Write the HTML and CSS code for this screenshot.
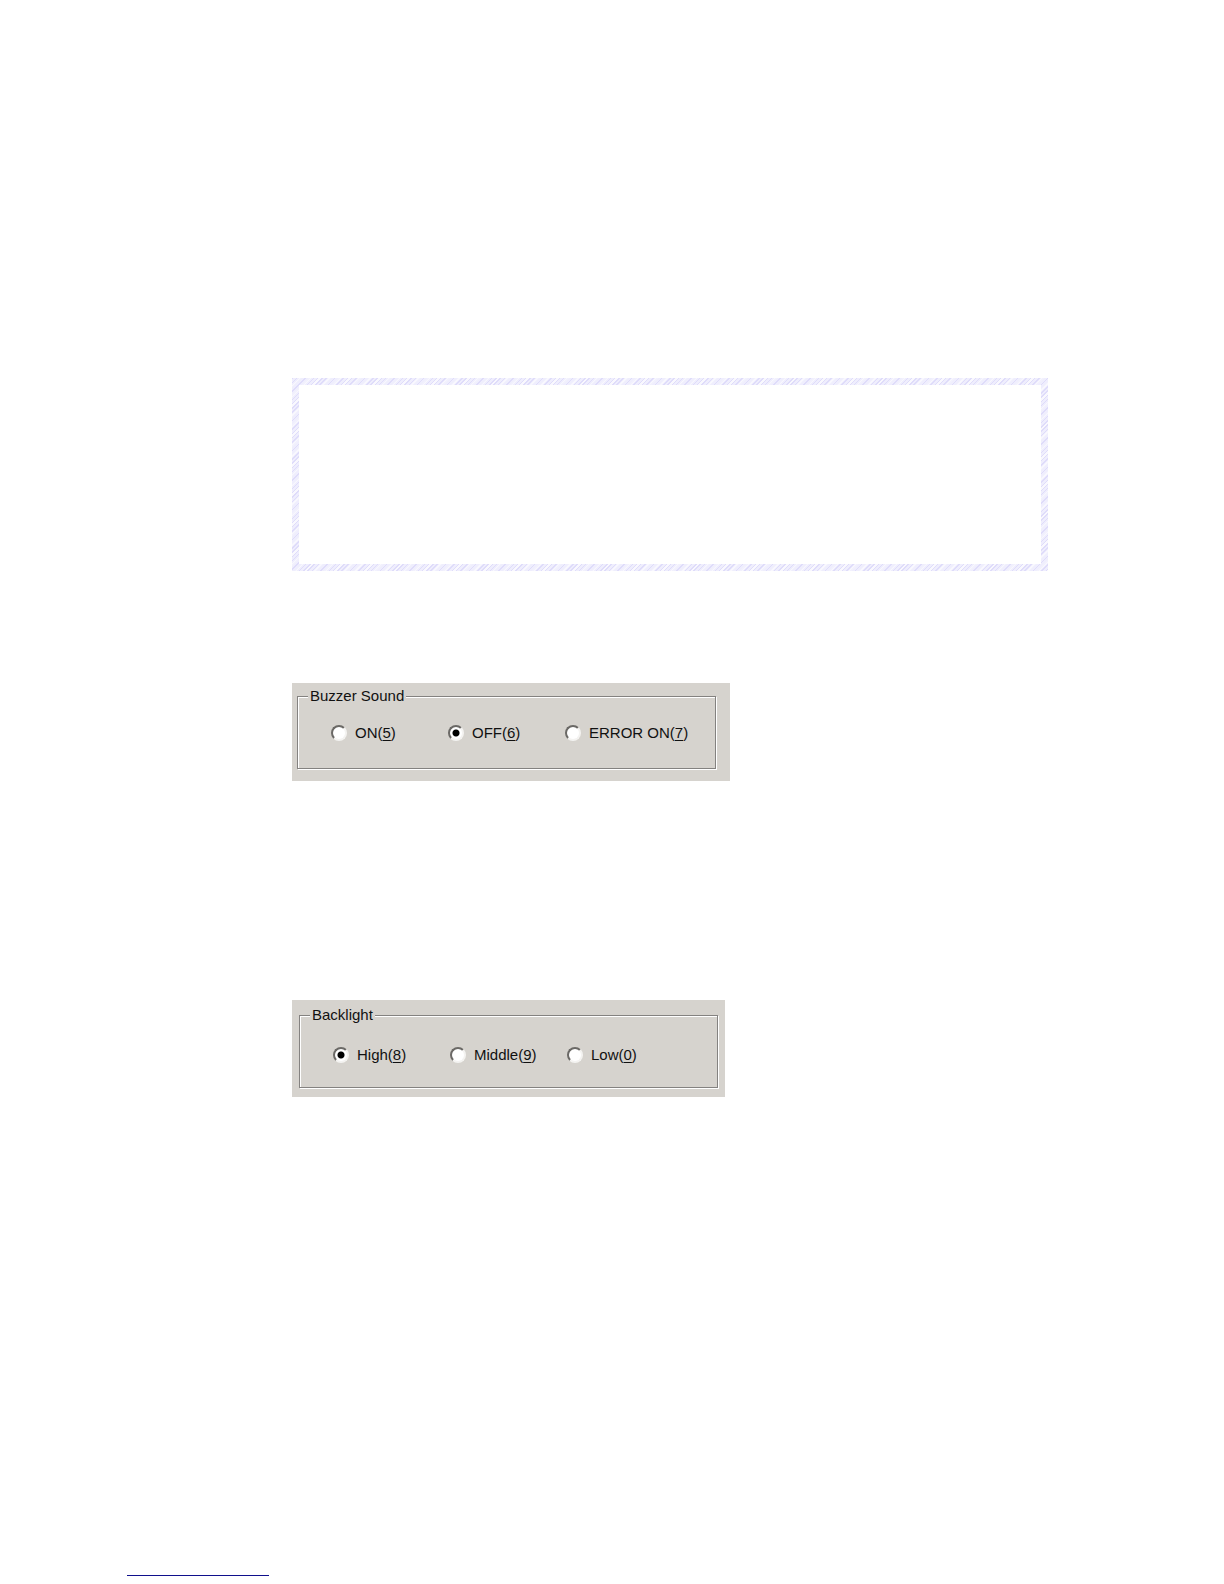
FILE: index.html
```
<!DOCTYPE html>
<html lang="en">

<head>
    <meta charset="UTF-8">
    <meta name="viewport" content="width=device-width, initial-scale=1.0">
    <title>Buzzer Sound / Backlight</title>
    <link rel="stylesheet" href="styles.css">
</head>

<body>
    <main class="content">
        <div class="note-box"></div>

        <form class="panel buzzer">
            <fieldset class="group">
                <legend>Buzzer Sound</legend>
                <div class="options">
                    <label class="option"><input type="radio" name="buzzer"><span>ON(<u>5</u>)</span></label>
                    <label class="option"><input type="radio" name="buzzer" checked><span>OFF(<u>6</u>)</span></label>
                    <label class="option"><input type="radio" name="buzzer"><span>ERROR ON(<u>7</u>)</span></label>
                </div>
            </fieldset>
        </form>

        <form class="panel backlight">
            <fieldset class="group">
                <legend>Backlight</legend>
                <div class="options">
                    <label class="option"><input type="radio" name="backlight" checked><span>High(<u>8</u>)</span></label>
                    <label class="option"><input type="radio" name="backlight"><span>Middle(<u>9</u>)</span></label>
                    <label class="option"><input type="radio" name="backlight"><span>Low(<u>0</u>)</span></label>
                </div>
            </fieldset>
        </form>
    </main>
    <footer class="footer">
        <hr class="footer-line">
    </footer>
</body>

</html>
```

FILE: styles.css
```
* {
    box-sizing: border-box;
}

body {
    display: flex;
    flex-direction: column;
    min-height: 100vh;
    margin: 0;
    background-color: #fff;
    color: #111;
    font-family: "Liberation Sans", Arial, sans-serif;
    font-size: 15px;
    line-height: 18px;
}

.content {
    padding: 378px 176px 0 292px;
}

/* Hatched frame */
.note-box {
    height: 193px;
    border: 7px solid transparent;
    background:
        linear-gradient(#fff, #fff) padding-box,
        repeating-linear-gradient(135deg, transparent 0 5px, rgba(255, 255, 255, 0.6) 5px 7px) border-box,
        repeating-linear-gradient(135deg, #dfdcfa 0 1px, #efeefd 1px 3px) border-box;
}

.panel {
    max-width: 100%;
    background-color: #d6d3ce;
}

.buzzer {
    width: 438px;
    margin-top: 112px;
    padding: 4px 14px 12px 5px;
}

.backlight {
    width: 433px;
    margin-top: 219px;
    padding: 6px 7px 9px;
}

/* Etched border: grey line with a white one beside it */
.group {
    min-width: 0;
    margin: 0;
    padding: 19px 10px 26px;
    border: 1px solid #848280;
    box-shadow: 1px 1px 0 #fff, inset 1px 1px 0 #fff;
}

.backlight .group {
    padding: 22px 10px 23px;
}

.group legend {
    padding: 0 2px;
    background-color: #d6d3ce;
}

.options {
    display: grid;
    grid-template-columns: 117px 117px auto;
    padding-left: 23px;
}

.option {
    display: flex;
    align-items: center;
    gap: 8px;
    white-space: nowrap;
}

.option input {
    appearance: none;
    flex: none;
    width: 16px;
    height: 16px;
    margin: 0;
    border: 2px solid;
    border-color: #6b6966 #f4f3f1 #f4f3f1 #6b6966;
    border-radius: 50%;
    background-color: #fff;
}

.option input:checked {
    background-image: radial-gradient(circle, #000 0 3px, #fff 4px);
}

.option u {
    text-underline-offset: 2px;
}

.footer {
    margin-top: auto;
    padding: 0 127px 8px;
}

.footer-line {
    width: 142px;
    height: 1px;
    margin: 0;
    border: 0;
    background-color: #10108c;
}
```
